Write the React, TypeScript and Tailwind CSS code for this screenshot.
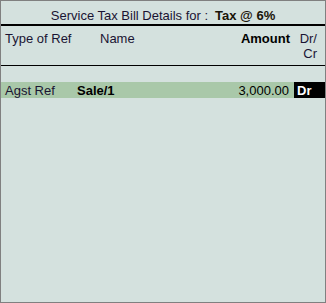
import React from "react"

const rows = [
  { type: "Agst Ref", name: "Sale/1", amount: "3,000.00", side: "Dr" },
]

const App = () => {
  return (
    <div
      className="w-[326px] h-[303px] border border-[#808080] bg-[#d4e1de] text-[13px] leading-[15px] text-[#1a1433] flex flex-col"
      style={{ fontFamily: '"Liberation Sans", Arial, sans-serif' }}
    >
      <div className="h-[23px] pt-[7px] flex justify-center items-start">
        <span>Service Tax Bill Details for :</span>
        <span className="ml-[7px] font-bold text-[#1a1408]">Tax @ 6%</span>
      </div>
      <div className="h-[2px] bg-black" />

      <div className="h-[39px] flex pt-[5px]">
        <div className="w-[99px] pl-[4px]">Type of Ref</div>
        <div className="flex-1">Name</div>
        <div className="font-bold text-black">Amount</div>
        <div className="w-[35px] pr-[8px] text-right">
          Dr/
          <br />
          Cr
        </div>
      </div>
      <div className="h-[1px] bg-black" />

      <div className="mt-[16px] flex flex-col">
        {rows.map((row, idx) => (
          <div key={idx} className="h-[16px] flex items-center bg-[#a9c8a9] text-black">
            <div className="w-[76px] pl-[4px] text-[#1a1433]">{row.type}</div>
            <div className="flex-1 font-bold">{row.name}</div>
            <div className="pr-[5px]">{row.amount}</div>
            <div className="w-[31px] h-full bg-black text-white font-bold pl-[3px] flex items-center">
              {row.side}
            </div>
          </div>
        ))}
      </div>
    </div>
  )
}

export default App
